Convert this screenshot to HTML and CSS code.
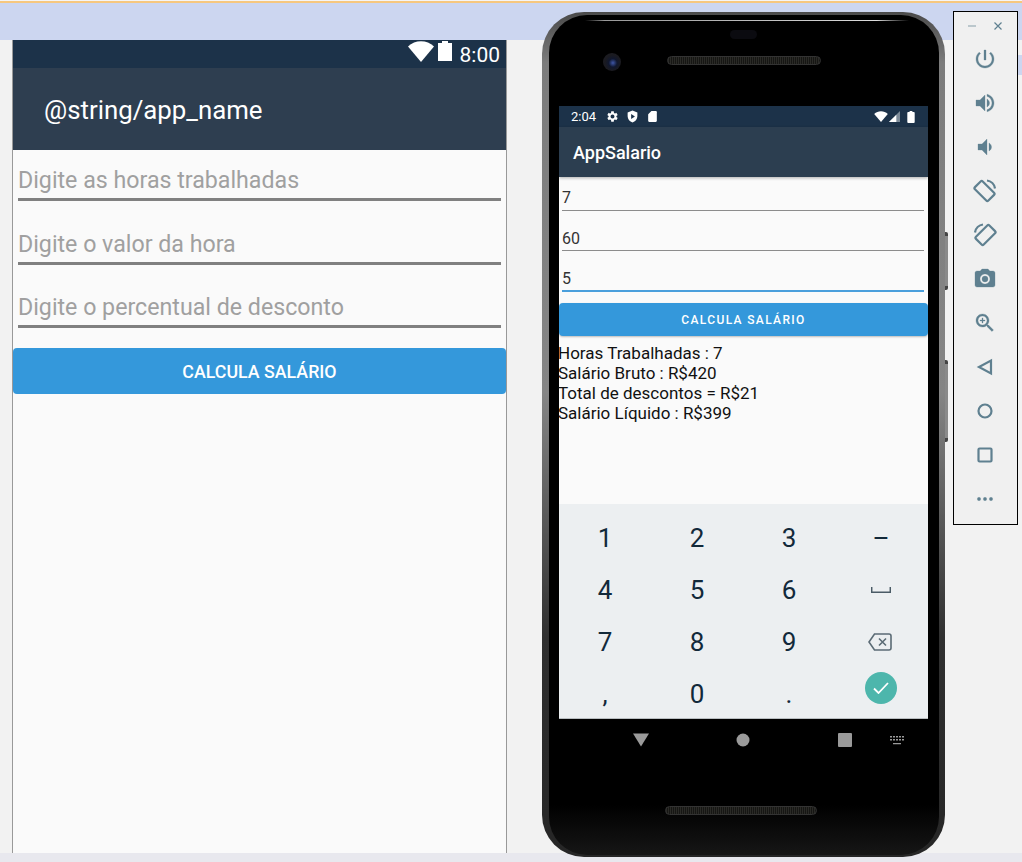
FILE: index.html
```html
<!DOCTYPE html>
<html lang="pt-BR">
<head>
  <meta charset="UTF-8" />
  <meta name="viewport" content="width=device-width, initial-scale=1" />
  <title>AppSalario</title>
  <link rel="stylesheet" href="styles.css">
</head>
<body>

  <div class="topband"></div>

  <div class="workspace">
    <!-- preview do layout -->
    <div class="preview">
      <div class="prev-status">
        <svg class="prev-wifi" viewBox="0 0 26 21"><path d="M0 5.5C7-1.5 19-1.5 26 5.5L13 21Z"/></svg>
        <svg class="prev-batt" viewBox="0 0 14 20"><path d="M4 0h6v2h4v18H0V2h4z"/></svg>
        <span>8:00</span>
      </div>
      <div class="prev-appbar">@string/app_name</div>
      <form class="prev-form">
        <input type="text" placeholder="Digite as horas trabalhadas" />
        <input type="text" placeholder="Digite o valor da hora" />
        <input type="text" placeholder="Digite o percentual de desconto" />
        <button type="button">CALCULA SALÁRIO</button>
      </form>
    </div>
  </div>

  <div class="bottomband"></div>

  <div class="sidechip"></div>

  <!-- aparelho -->
  <div class="phone">
    <span class="side-btn vol"></span>
    <span class="side-btn power"></span>
    <div class="bezel">
      <span class="sensor"></span>
      <span class="camera"></span>
      <span class="speaker top"></span>
      <span class="speaker bottom"></span>

      <div class="screen">
        <div class="statusbar">
          <span class="clock">2:04</span>
          <svg class="st-icon" viewBox="0 0 24 24"><path d="M19.14 12.94c.04-.3.06-.61.06-.94 0-.32-.02-.64-.07-.94l2.03-1.58c.18-.14.23-.41.12-.61l-1.92-3.32c-.12-.22-.37-.29-.59-.22l-2.39.96c-.5-.38-1.03-.7-1.62-.94l-.36-2.54c-.04-.24-.24-.41-.48-.41h-3.84c-.24 0-.43.17-.47.41l-.36 2.54c-.59.24-1.13.57-1.62.94l-2.39-.96c-.22-.08-.47 0-.59.22L2.74 8.87c-.12.21-.08.47.12.61l2.03 1.58c-.05.3-.09.63-.09.94s.02.64.07.94l-2.03 1.58c-.18.14-.23.41-.12.61l1.92 3.32c.12.22.37.29.59.22l2.39-.96c.5.38 1.03.7 1.62.94l.36 2.54c.05.24.24.41.48.41h3.84c.24 0 .44-.17.47-.41l.36-2.54c.59-.24 1.13-.56 1.62-.94l2.39.96c.22.08.47 0 .59-.22l1.92-3.32c.12-.22.07-.47-.12-.61l-2.01-1.58zM12 15.6c-1.98 0-3.6-1.62-3.6-3.6s1.62-3.6 3.6-3.6 3.6 1.62 3.6 3.6-1.62 3.6-3.6 3.6z"/></svg>
          <svg class="st-icon" viewBox="0 0 24 24"><path fill-rule="evenodd" d="M12 1 3 4.5v7C3 17 7 21.6 12 23c5-1.400 9-6 9-11.500v-7zM9.500 7.500v9l7-4.500z"/></svg>
          <svg class="st-icon" viewBox="0 0 24 24"><path d="M18 2h-8L4 8v12c0 1.100.9 2 2 2h12c1.100 0 2-.9 2-2V4c0-1.100-.9-2-2-2z"/></svg>
          <span class="st-fill"></span>
          <svg class="st-wifi" viewBox="0 0 26 21"><path d="M0 5.500C7-1.500 19-1.500 26 5.500L13 21Z"/></svg>
          <svg class="st-signal" viewBox="0 0 12 12"><path d="M12 0v12H0z" fill="#7d8b98"/><path d="M8 4v8H0z"/></svg>
          <svg class="st-batt" viewBox="0 0 8 13"><path d="M2.500 0h3v1H7a1 1 0 0 1 1 1v10a1 1 0 0 1-1 1H1a1 1 0 0 1-1-1V2a1 1 0 0 1 1-1h1.500z"/></svg>
        </div>
        <div class="appbar">AppSalario</div>

        <form class="fields">
          <input type="text" value="7" />
          <input type="text" value="60" />
          <input class="focused" type="text" value="5" />
        </form>
        <button class="calc" type="button">CALCULA SALÁRIO</button>

        <div class="result">
          <div>Horas Trabalhadas : 7</div>
          <div>Salário Bruto : R$420</div>
          <div>Total de descontos = R$21</div>
          <div>Salário Líquido : R$399</div>
        </div>

        <div class="keyboard">
          <span>1</span><span>2</span><span>3</span><span>–</span>
          <span>4</span><span>5</span><span>6</span>
          <svg class="key-space" viewBox="0 0 20 6"><path d="M.7 0v5.300h18.600V0" fill="none" stroke="#4a5b66" stroke-width="1.500"/></svg>
          <span>7</span><span>8</span><span>9</span>
          <svg class="key-back" viewBox="0 0 24 18"><path d="M6.500 1H21a2 2 0 0 1 2 2v12a2 2 0 0 1-2 2H6.500L1 9zM11 5.500l7 7M18 5.500l-7 7" fill="none" stroke="#5b6b75" stroke-width="1.600"/></svg>
          <span>,</span><span>0</span><span>.</span>
          <span class="key-ok"><svg viewBox="0 0 16 12"><path d="M1 6.500 5.500 11 15 1" fill="none" stroke="#fff" stroke-width="1.800"/></svg></span>
        </div>
      </div>

      <div class="navbar">
        <svg viewBox="0 0 24 24"><path d="M4 5.500h16l-8 13z"/></svg>
        <svg viewBox="0 0 24 24"><circle cx="12" cy="12" r="6.500"/></svg>
        <svg viewBox="0 0 24 24"><rect x="5" y="5" width="14" height="14" rx="1"/></svg>
        <svg viewBox="0 0 24 24"><path d="M5 8h2v1.500H5zm3 0h2v1.500H8zm3 0h2v1.500h-2zm3 0h2v1.500h-2zm3 0h2v1.500h-2zM5 11h2v1.500H5zm3 0h2v1.500H8zm3 0h2v1.500h-2zm3 0h2v1.500h-2zm3 0h2v1.500h-2zM8 15h8v1.200H8z"/></svg>
      </div>
    </div>
  </div>

  <!-- barra do emulador -->
  <div class="toolbar">
    <div class="win-btns">
      <svg viewBox="0 0 10 10"><path d="M1 5h8" stroke-opacity=".6"/></svg>
      <svg viewBox="0 0 10 10"><path d="M1.500 1.500l7 7M8.500 1.500l-7 7"/></svg>
    </div>
    <svg viewBox="0 0 24 24"><path class="solid" d="M13 3h-2v10h2V3zm4.830 2.170l-1.420 1.420C17.990 7.860 19 9.810 19 12c0 3.870-3.130 7-7 7s-7-3.130-7-7c0-2.190 1.010-4.140 2.580-5.420L6.170 5.170C4.230 6.820 3 9.260 3 12c0 4.970 4.030 9 9 9s9-4.030 9-9c0-2.740-1.230-5.180-3.170-6.830z"/></svg>
    <svg viewBox="0 0 24 24"><path class="solid" d="M3 9v6h4l5 5V4L7 9H3zm13.500 3c0-1.770-1.020-3.290-2.500-4.030v8.050c1.480-.73 2.500-2.250 2.500-4.020zM14 3.230v2.060c2.890.86 5 3.540 5 6.710s-2.110 5.850-5 6.710v2.060c4.010-.91 7-4.490 7-8.770s-2.990-7.860-7-8.770z"/></svg>
    <svg viewBox="0 0 24 24"><path class="solid" d="M18.500 12c0-1.770-1.020-3.290-2.500-4.030v8.050c1.480-.73 2.500-2.250 2.500-4.020zM5 9v6h4l5 5V4L9 9H5z"/></svg>
    <svg viewBox="0 0 24 24"><rect x="6" y="2.500" width="11" height="19" rx="1.500" transform="rotate(-45 11.500 12)"/><path d="M14 1.500c4 .6 7.400 3.800 8 8"/></svg>
    <svg viewBox="0 0 24 24"><rect x="7" y="2.500" width="11" height="19" rx="1.500" transform="rotate(45 12.500 12)"/><path d="M10 1.500c-4 .6-7.400 3.800-8 8"/></svg>
    <svg viewBox="0 0 24 24"><path class="solid" fill-rule="evenodd" d="M9 2L7.170 4H4c-1.100 0-2 .9-2 2v12c0 1.100.9 2 2 2h16c1.100 0 2-.9 2-2V6c0-1.100-.9-2-2-2h-3.170L15 2H9zm3 15c-2.760 0-5-2.240-5-5s2.240-5 5-5 5 2.240 5 5-2.240 5-5 5zm0-2a3 3 0 1 0 0-6 3 3 0 0 0 0 6z"/></svg>
    <svg viewBox="0 0 24 24"><path class="solid" d="M15.500 14h-.79l-.28-.27C15.410 12.590 16 11.110 16 9.500 16 5.910 13.090 3 9.500 3S3 5.910 3 9.500 5.910 16 9.500 16c1.610 0 3.090-.59 4.230-1.570l.27.28v.79l5 4.990L20.490 19l-4.990-5zm-6 0C7.010 14 5 11.990 5 9.500S7.010 5 9.500 5 14 7.010 14 9.500 11.990 14 9.500 14zM12 10h-2v2H9v-2H7V9h2V7h1v2h2v1z"/></svg>
    <svg viewBox="0 0 24 24"><path d="M18 5.500v13L6 12z"/></svg>
    <svg viewBox="0 0 24 24"><circle cx="12" cy="12" r="6.500"/></svg>
    <svg viewBox="0 0 24 24"><rect x="5.500" y="5.500" width="13" height="13" rx="1"/></svg>
    <svg viewBox="0 0 24 24"><path class="solid" d="M6 10.300a1.700 1.700 0 1 1 0 3.400 1.700 1.700 0 0 1 0-3.400zm6 0a1.700 1.700 0 1 1 0 3.400 1.700 1.700 0 0 1 0-3.400zm6 0a1.700 1.700 0 1 1 0 3.400 1.700 1.700 0 0 1 0-3.400z"/></svg>
  </div>

</body>
</html>
```

FILE: styles.css
```css
/* Reset básico */
* {
  box-sizing: border-box;
  margin: 0;
  padding: 0;
  font-family: Roboto, 'Liberation Sans', sans-serif;
}

html, body {
  height: 100%;
  overflow: hidden;
}

body {
  background: #f2f2f2;
  display: flex;
  flex-direction: column;
  height: 862px;
  position: relative;
}

input, button {
  display: block;
  border: none;
  outline: none;
  background: transparent;
}

/* Faixas da janela */
.topband {
  height: 40px;
  flex: none;
  background: #ccd6f0;
  border-top: 1px solid #f5f5f5;
  box-shadow: inset 0 2px 0 #f6c77e;
}

.workspace {
  flex: 1;
  min-height: 0;
  padding-left: 12px;
}

.bottomband {
  height: 9px;
  flex: none;
  background: #e8e8ee;
}

.sidechip {
  position: absolute;
  left: 1018px;
  top: 55px;
  width: 4px;
  height: 20px;
  background: #ccd6f0;
}

/* Preview do layout */
.preview {
  width: 495px;
  height: 100%;
  background: #fafafa;
  border-left: 1px solid #999;
  border-right: 1px solid #999;
}

.prev-status {
  height: 28px;
  background: #1c3249;
  color: #fff;
  display: flex;
  align-items: flex-start;
  justify-content: flex-end;
  padding-right: 6px;
  font-size: 21px;
  line-height: 30px;
}

.prev-status svg {
  fill: #fff;
  margin-top: 1px;
}

.prev-wifi {
  width: 26px;
  height: 21px;
  margin-right: 4px;
}

.prev-batt {
  width: 14px;
  height: 20px;
  margin-right: 8px;
}

.prev-appbar {
  height: 82px;
  background: #2e3e50;
  color: #fff;
  font-size: 25.8px;
  line-height: 85px;
  padding-left: 31px;
}

.prev-form {
  display: flex;
  flex-direction: column;
  gap: 12.5px;
}

.prev-form input {
  height: 51px;
  margin: 0 5px;
  padding-top: 12px;
  border-bottom: 3px solid #808080;
  font-size: 23.2px;
  width: 483px;
}

.prev-form input::placeholder {
  color: #a0a0a0;
  opacity: 1;
}

.prev-form button {
  height: 46px;
  margin-top: 7.5px;
  background: #3498db;
  border-radius: 4px;
  color: #fff;
  font-size: 17.8px;
  font-weight: 500;
}

/* Aparelho */
.phone {
  position: absolute;
  left: 542px;
  top: 12px;
  width: 403px;
  height: 845px;
  padding: 3px 6px 2px 7px;
  border-radius: 42px;
  background: linear-gradient(180deg, #4a4a4a 0, #7c7c7c 6%, #858585 45%, #303030 74%, #262626 100%);
}

.side-btn {
  position: absolute;
  left: 403px;
  width: 3px;
  background: #8a8a8a;
  border-top: 4px solid #444;
  border-bottom: 4px solid #444;
  border-radius: 0 2px 2px 0;
}

.side-btn.vol {
  top: 220px;
  height: 58px;
}

.side-btn.power {
  top: 348px;
  height: 82px;
}

.bezel {
  position: relative;
  height: 100%;
  padding: 91px 10px 0;
  border-radius: 38px;
  background: linear-gradient(180deg, #000 0, #000 94%, #161616 100%);
}

/* brilho no topo do vidro */
.bezel::before {
  content: "";
  position: absolute;
  left: 36px;
  right: 30px;
  top: 5px;
  height: 1px;
  background: linear-gradient(90deg, transparent, #999 6%, #bbb 50%, #ddd 90%, transparent);
}

.sensor {
  position: absolute;
  left: 181px;
  top: 15px;
  width: 27px;
  height: 9px;
  border-radius: 5px;
  background: #0b0b10;
}

.camera {
  position: absolute;
  left: 54px;
  top: 38px;
  width: 18px;
  height: 18px;
  border-radius: 50%;
  background: radial-gradient(circle at 55% 55%, #3f57a8 0, #10172e 30%, #1a1a20 55%, #202024 100%);
}

.speaker {
  position: absolute;
  height: 9px;
  border-radius: 5px;
  background: repeating-linear-gradient(90deg, #2a2a26 0, #2a2a26 1px, #161614 1px, #161614 2px);
  border: 1px solid #333;
}

.speaker.top {
  left: 118px;
  top: 41px;
  width: 154px;
}

.speaker.bottom {
  left: 116px;
  top: 791px;
  width: 152px;
}

/* Tela do app */
.screen {
  height: 613px;
  width: 369px;
  background: #fafafa;
  display: flex;
  flex-direction: column;
}

.statusbar {
  height: 21px;
  flex: none;
  background: #1c3249;
  color: #fff;
  display: flex;
  align-items: center;
  padding: 0 13px 0 12px;
}

.statusbar svg {
  fill: #fff;
  display: block;
}

.clock {
  font-size: 13px;
  margin-right: 10px;
  width: 25px;
}

.st-icon {
  width: 13px;
  height: 13px;
  margin-right: 7px;
}

.st-fill {
  flex: 1;
}

.st-wifi {
  width: 14px;
  height: 11px;
  margin-right: 1px;
}

.st-signal {
  width: 11px;
  height: 11px;
  margin-right: 7px;
}

.st-batt {
  width: 8px;
  height: 12px;
}

.appbar {
  height: 50px;
  flex: none;
  background: #2c3e50;
  color: #fff;
  font-size: 18px;
  font-weight: 500;
  line-height: 51px;
  padding-left: 14px;
  box-shadow: 0 1px 3px rgba(0, 0, 0, 0.3);
}

.fields {
  display: flex;
  flex-direction: column;
  gap: 7px;
}

.fields input {
  height: 34px;
  width: 362px;
  margin-left: 3px;
  padding-top: 8px;
  border-bottom: 1px solid #8c8c8c;
  font-size: 16px;
  color: #333;
}

.fields input + input {
  height: 33px;
}

.fields input.focused {
  height: 34px;
  border-bottom: 2px solid #4a9fdc;
}

.calc {
  height: 33px;
  width: 100%;
  margin-top: 11px;
  flex: none;
  background: #3498db;
  border-radius: 4px;
  color: #fff;
  font-size: 12px;
  font-weight: 500;
  letter-spacing: 1.35px;
  box-shadow: 0 1px 2px rgba(0, 0, 0, 0.25);
}

.result {
  margin: 7px 0 0 -1px;
  font-size: 17px;
  line-height: 20px;
  color: #111;
}

/* Teclado numérico */
.keyboard {
  margin-top: auto;
  height: 215px;
  padding-top: 8px;
  background: #eceff1;
  border-bottom: 1px solid #b9bec1;
  display: grid;
  grid-template-columns: repeat(4, 92px);
  grid-auto-rows: 52px;
  align-items: center;
  justify-items: center;
  font-size: 26px;
  color: #12293a;
}

.key-space {
  width: 20px;
  height: 6px;
}

.key-back {
  width: 24px;
  height: 18px;
  margin-right: 2px;
}

.key-ok {
  width: 32px;
  height: 32px;
  margin: 0 1px 12px 0;
  border-radius: 50%;
  background: #4db6ac;
  display: flex;
  align-items: center;
  justify-content: center;
}

.key-ok svg {
  width: 16px;
  height: 12px;
}

.navbar {
  display: flex;
  align-items: center;
  height: 42px;
  width: 369px;
  padding-left: 70px;
  gap: 78px;
}

.navbar svg {
  width: 24px;
  height: 24px;
  fill: #9a9a9a;
}

.navbar svg:last-child {
  margin-left: -50.5px;
}

/* Barra do emulador */
.toolbar {
  position: absolute;
  left: 953px;
  top: 11px;
  width: 65px;
  height: 514px;
  background: #f0f0f0;
  border: 1px solid #000;
  display: flex;
  flex-direction: column;
  align-items: center;
  gap: 20px;
  padding: 4px 1px 0 0;
}

.toolbar svg {
  width: 24px;
  height: 24px;
  flex: none;
  fill: none;
  stroke: #5f8090;
  stroke-width: 2.2;
}

.toolbar svg .solid {
  fill: #5f8090;
  stroke: #5f8090;
  stroke-width: 0.3;
}

.win-btns {
  display: flex;
  justify-content: space-between;
  width: 36px;
  height: 20px;
  align-items: center;
  flex: none;
  margin-bottom: -9px;
}

.toolbar .win-btns svg {
  width: 10px;
  height: 10px;
  stroke-width: 1.2;
}
```
